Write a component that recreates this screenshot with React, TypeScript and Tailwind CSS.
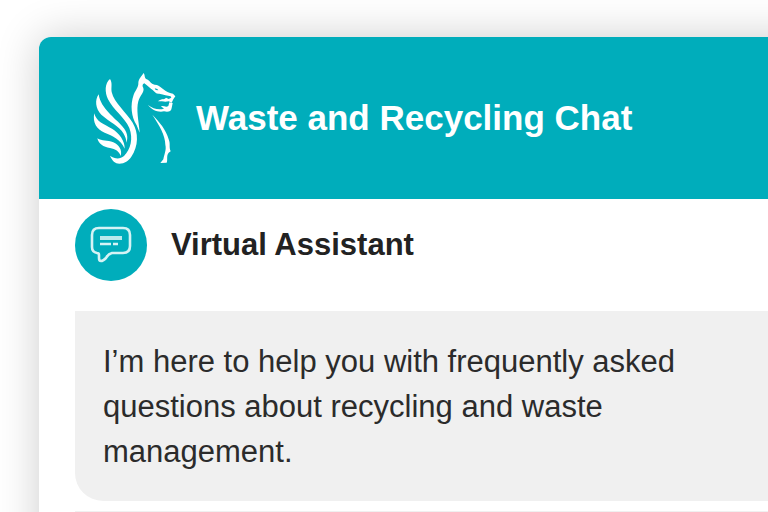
function GriffinLogo() {
  return (
    <svg viewBox="24 24 252 276" className="h-[92px] w-[84px] shrink-0" fill="#fff" aria-hidden="true">
      {/* wing */}
      <path d="M78 45 C62 58 62 84 72 106 C88 138 122 160 136 192 C148 224 140 256 120 276 C108 286 94 286 78 275 C84 290 94 299 106 299 C122 299 134 290 142 278 C164 246 164 206 146 176 C128 146 90 116 83 84 C81 68 86 58 78 45Z" />
      <path d="M44 91 C32 108 34 134 52 152 C76 174 106 186 118 208 C124 218 127 226 127 236 C133 220 130 204 116 188 C94 162 50 134 44 91Z" />
      <path d="M31 148 C25 176 38 196 62 206 C86 216 110 226 122 254 C123 230 106 208 84 194 C58 180 36 172 31 148Z" />
      <path d="M40 223 C44 240 58 249 78 252 C94 255 106 262 110 276 C116 258 104 242 88 235 C70 228 54 232 40 223Z" />
      {/* neck and head */}
      <path d="M179 27 C172 38 164 44 163 56 C164 68 156 76 149 92 C138 124 142 158 158 184 L167 206 C164 170 156 138 163 112 C168 94 182 84 178 72 C174 66 175 60 181 58 C190 64 198 74 206 78 C212 84 216 90 226 89 C240 92 250 95 260 97 L262 101 L254 105 L246 101 C240 108 230 103 222 112 C232 112 238 113 244 113 L254 112 L263 116 L268 106 L274 97 L267 89 C254 88 246 82 238 76 C228 68 222 62 212 62 C200 60 198 50 188 46 C180 42 184 34 179 27Z" />
      <path d="M192 123 C204 138 222 146 240 142 C250 144 262 144 263 132 L266 117 L256 115 L253 126 C246 132 238 124 231 127 L240 134 C224 139 206 134 192 123Z" />
      <path d="M212 73 L220 75 L223 79 L215 78Z" fill="#00adbb" />
      {/* chest */}
      <path d="M205 152 C226 184 244 214 244 242 C248 258 240 272 238 286 L229 297 L248 296 C252 288 246 276 254 266 L260 262 C254 250 260 240 254 226 C246 196 226 174 205 152Z" />
    </svg>
  );
}

function ChatIcon() {
  return (
    <svg viewBox="0 0 42 38" className="h-[38px] w-[42px]" fill="none" stroke="#d5f3f5" strokeLinejoin="round" aria-hidden="true">
      <path d="M9 2 H33 Q40 2 40 9 V20 Q40 27 33 27 H22 Q18 28 16 32 Q13 35 11 35 Q9 35 9 32 V29 Q9 27 7 27 Q2 26 2 21 V9 Q2 2 9 2Z" strokeWidth="2.6" />
      <path d="M10 12 H32" strokeWidth="4" stroke="#b9eaed" />
      <path d="M10 18 H21 M23 18 H28" strokeWidth="2.4" />
    </svg>
  );
}

export default function App() {
  return (
    <div className="h-screen overflow-hidden bg-white pl-[39px] pt-[37px] font-['Liberation_Sans',Arial,sans-serif]">
      <main className="-mr-16 min-h-full rounded-tl-xl bg-white shadow-[0_0_44px_rgba(0,0,0,0.2)]">
        <header className="flex h-[162px] items-center gap-5 rounded-tl-xl bg-[#00adbb] pl-[53px]">
          <GriffinLogo />
          <h1 className="whitespace-nowrap text-[35px] font-bold leading-10 text-white">Waste and Recycling Chat</h1>
        </header>
        <section className="pl-9">
          <div className="flex items-center gap-6 pb-[30px] pt-[10px]">
            <span className="flex size-[72px] items-center justify-center rounded-full bg-[#00adbb]">
              <ChatIcon />
            </span>
            <h2 className="text-[31px] font-bold leading-9 text-[#222]">Virtual Assistant</h2>
          </div>
          <div className="rounded-bl-[28px] bg-[#f0f0f0] pb-[27px] pl-7 pr-24 pt-[28px]">
            <p className="text-[31px] leading-[45px] text-[#2b2b2b]">
              I’m here to help you with frequently asked questions about recycling and waste management.
            </p>
          </div>
          <div className="mt-[10px] h-20 bg-[#f0f0f0]" />
        </section>
      </main>
    </div>
  );
}
